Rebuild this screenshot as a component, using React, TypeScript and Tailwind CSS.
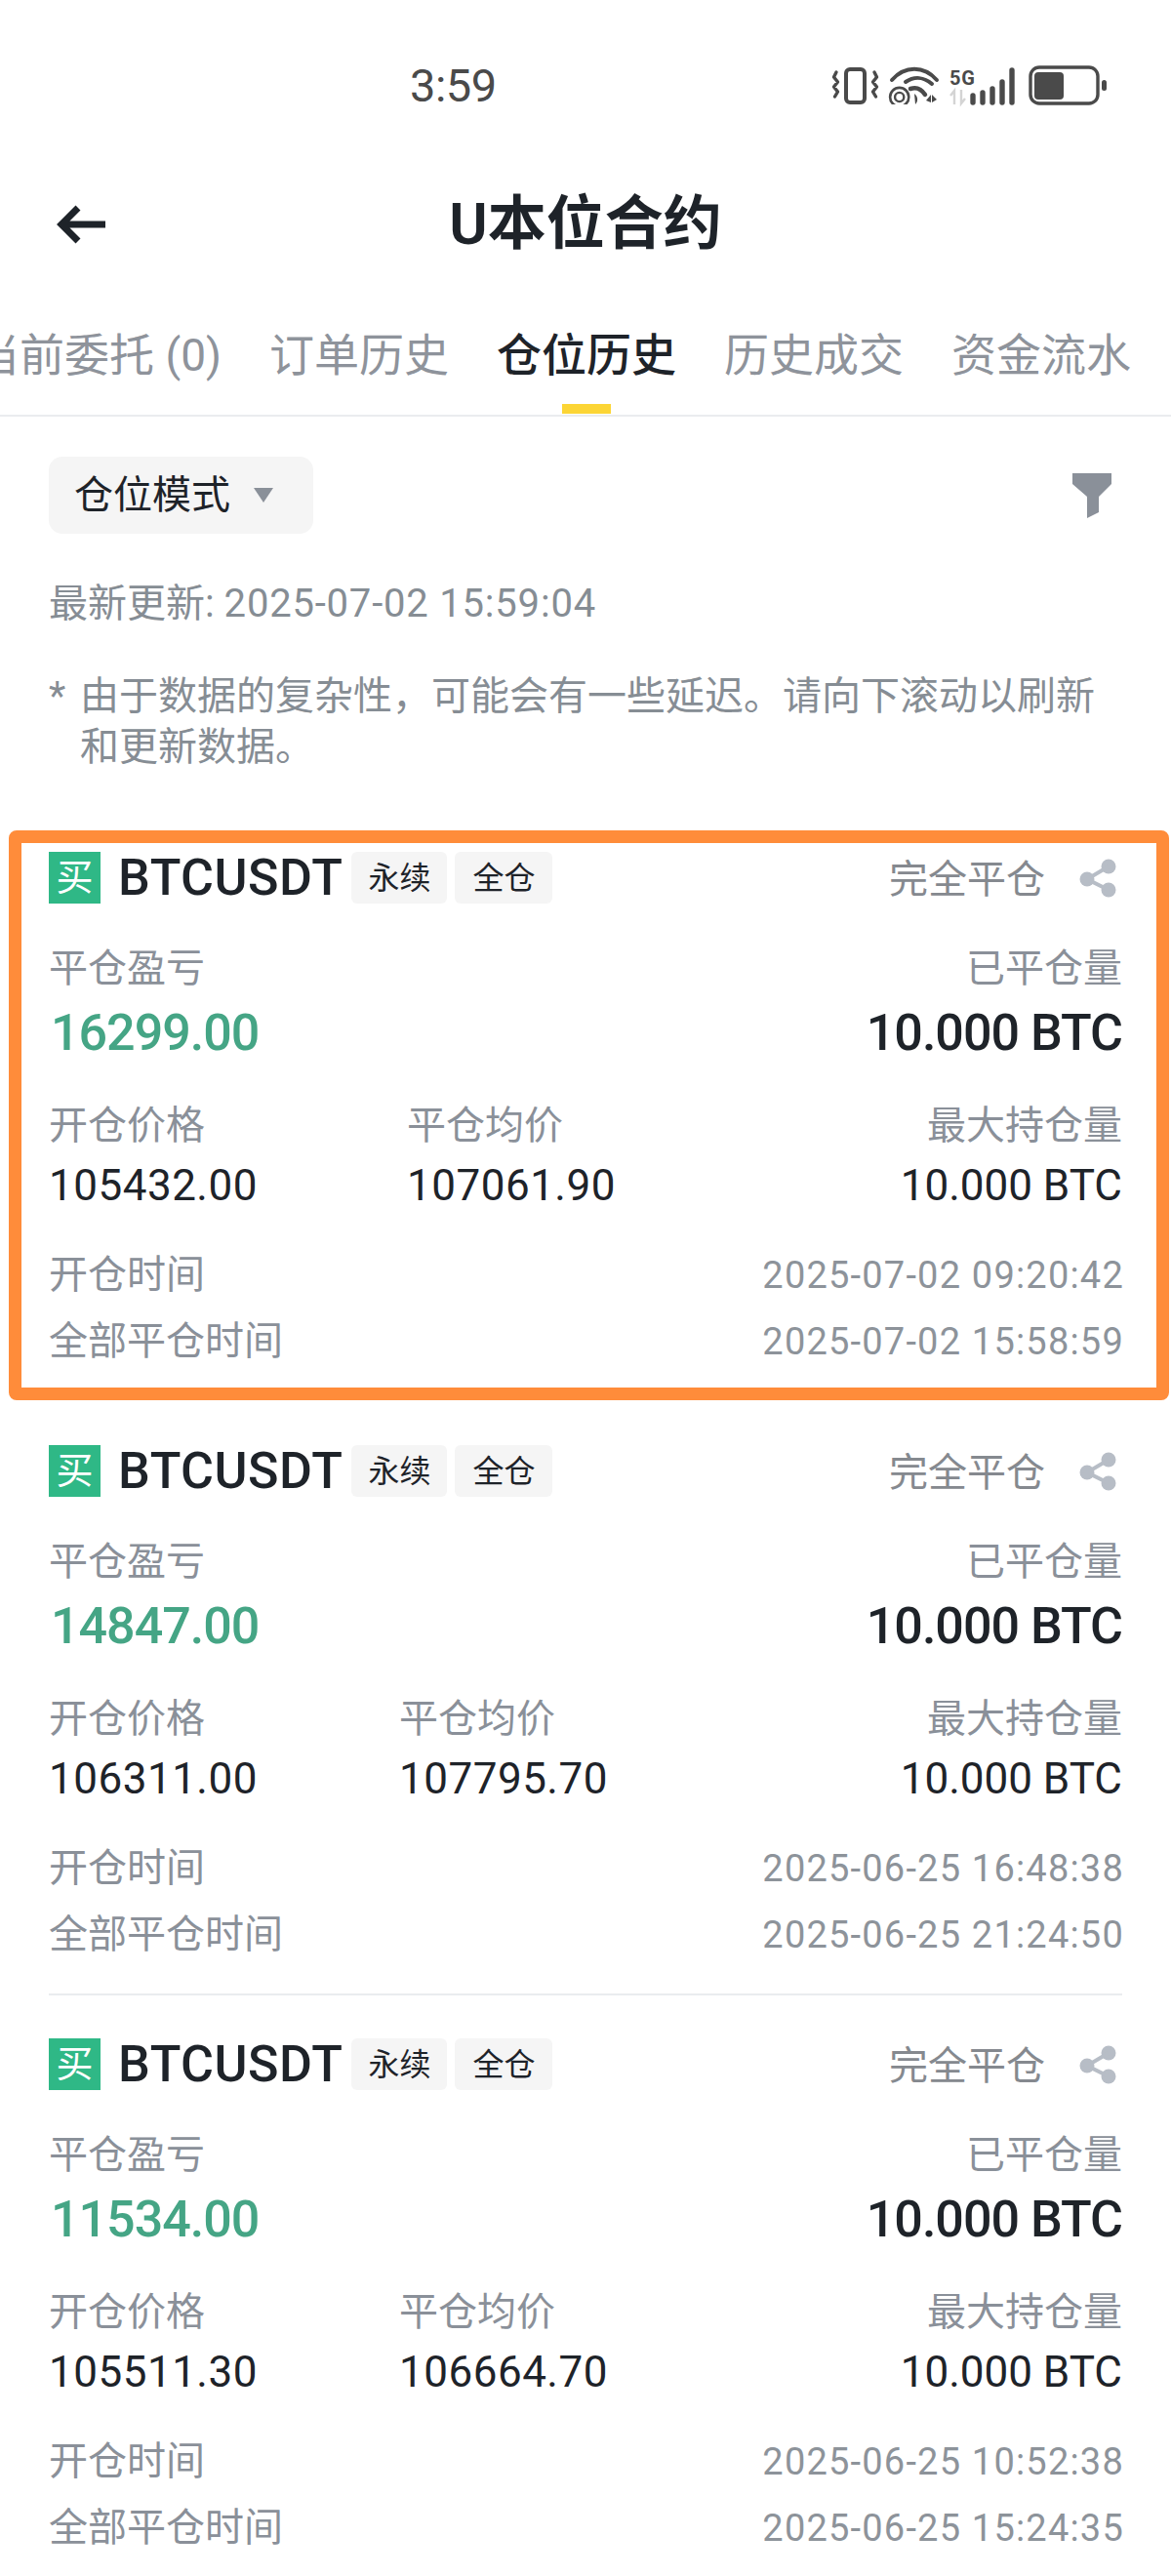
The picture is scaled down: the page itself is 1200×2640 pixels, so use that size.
const sans = `font-['Roboto','Noto_Sans_CJK_SC',sans-serif]`

type Trade = {
  pnl: string
  open: string
  close: string
  openTime: string
  closeTime: string
  midCol: string
}

const trades: Trade[] = [
  { pnl: '16299.00', open: '105432.00', close: '107061.90', openTime: '2025-07-02 09:20:42', closeTime: '2025-07-02 15:58:59', midCol: 'w-[367px]' },
  { pnl: '14847.00', open: '106311.00', close: '107795.70', openTime: '2025-06-25 16:48:38', closeTime: '2025-06-25 21:24:50', midCol: 'w-[359px]' },
  { pnl: '11534.00', open: '105511.30', close: '106664.70', openTime: '2025-06-25 10:52:38', closeTime: '2025-06-25 15:24:35', midCol: 'w-[359px]' },
]

function StatusIcons() {
  return (
    <svg width="290" height="48" viewBox="850 64 290 48" fill="none">
      <defs>
        <clipPath id="wifi-clip"><rect x="905" y="64" width="65" height="43" /></clipPath>
      </defs>
      {/* vibrate */}
      <rect x="867" y="71" width="19" height="34" rx="4" stroke="#4a4a4a" strokeWidth="4" />
      <path d="M857 74l-2.5 5 4 5-4 5 4 5-3 5M896 74l2.5 5-4 5 4 5-4 5 3 5" stroke="#4a4a4a" strokeWidth="3.4" strokeLinecap="round" strokeLinejoin="round" />
      {/* wifi */}
      <g clipPath="url(#wifi-clip)" stroke="#4a4a4a">
        <path d="M914 82c13-15 33-15 46 0" strokeWidth="4" strokeLinecap="round" />
        <path d="M928 84c9-6 19-5 27 2" strokeWidth="4" strokeLinecap="round" />
        <path d="M933 91c6-2 11 0 15 6" strokeWidth="4.5" strokeLinecap="round" />
        <circle cx="921.7" cy="99.5" r="9.6" strokeWidth="2.6" />
        <circle cx="921.7" cy="99.5" r="4.6" strokeWidth="2.4" />
      </g>
      <path d="M937 96c4 3 4 8 1 11zM954 97l-5 6 5 2zM955 97l5 5-5 3z" fill="#4a4a4a" />
      {/* 5G + signal */}
      <text x="973" y="87" fontSize="20" fontWeight="700" fill="#4a4a4a" fontFamily="Roboto, sans-serif" textLength="26">5G</text>
      <path d="M978 107V93l-4 5M985 92v14l4-5" stroke="#d4d4d4" strokeWidth="2.4" />
      <g stroke="#4a4a4a" strokeWidth="5.4" strokeLinecap="round">
        <path d="M997 98v7M1007 95v10M1017 91v14M1027 84v21M1037 72v33" />
      </g>
      {/* battery */}
      <rect x="1056" y="69" width="69" height="37" rx="9" stroke="#4a4a4a" strokeWidth="3.4" />
      <rect x="1060" y="74" width="30" height="28" rx="4" fill="#4a4a4a" />
      <rect x="1129" y="82" width="5" height="11" rx="2.5" fill="#4a4a4a" />
    </svg>
  )
}

function ShareIcon() {
  return (
    <svg width="38" height="40" viewBox="0 0 38 40" fill="#b7bdc6">
      <circle cx="30" cy="8" r="7.5" />
      <circle cx="8" cy="21" r="7.5" />
      <circle cx="30" cy="32" r="7.5" />
      <path d="M30 8L8 21l22 11" fill="none" stroke="#b7bdc6" strokeWidth="4" />
    </svg>
  )
}

function TradeCard({ trade }: { trade: Trade }) {
  return (
    <div>
      {/* Header row */}
      <div className="flex items-center h-[53px]">
        <div className="w-[53px] h-[53px] bg-[#2fb886] text-white text-[38px] flex items-center justify-center">买</div>
        <span className="ml-[18px] text-[52px] font-medium text-[#1e2329] tracking-[0.5px]">BTCUSDT</span>
        <span className="ml-[9px] w-[98px] h-[53px] rounded-md bg-[#f5f5f5] text-[32px] text-[#1e2329] flex items-center justify-center">永续</span>
        <span className="ml-[8px] w-[100px] h-[53px] rounded-md bg-[#f5f5f5] text-[32px] text-[#1e2329] flex items-center justify-center">全仓</span>
        <span className="ml-auto pt-[5px] text-[40px] text-[#85898f]">完全平仓</span>
        <span className="ml-[35px] mr-[6px]"><ShareIcon /></span>
      </div>

      {/* PnL row */}
      <div className="mt-[41px] flex justify-between text-[40px] leading-[52px] text-[#8a9099]">
        <span>平仓盈亏</span>
        <span>已平仓量</span>
      </div>
      <div className="mt-[10px] flex justify-between items-center text-[52px] leading-[60px] font-medium tracking-[-1px]">
        <span className="text-[#45a585] pl-[2px]">{trade.pnl}</span>
        <span className="text-[#1e2329]">10.000 BTC</span>
      </div>

      {/* Price row */}
      <div className="mt-[39px] flex text-[40px] leading-[52px] text-[#8a9099]">
        <span className={trade.midCol}>开仓价格</span>
        <span>平仓均价</span>
        <span className="ml-auto">最大持仓量</span>
      </div>
      <div className="mt-[9px] flex text-[44px] leading-[52px] text-[#1e2329] tracking-[0.5px]">
        <span className={trade.midCol}>{trade.open}</span>
        <span>{trade.close}</span>
        <span className="ml-auto tracking-normal">10.000 BTC</span>
      </div>

      {/* Times */}
      <div className="mt-[40px] flex justify-between text-[40px] leading-[52px] text-[#8a9099]">
        <span>开仓时间</span>
        <span className="mr-[-2px] text-[38px] text-[#8d939a] tracking-[1.2px]">{trade.openTime}</span>
      </div>
      <div className="mt-[16px] flex justify-between text-[40px] leading-[52px] text-[#8a9099]">
        <span>全部平仓时间</span>
        <span className="mr-[-2px] text-[38px] text-[#8d939a] tracking-[1.2px]">{trade.closeTime}</span>
      </div>
    </div>
  )
}

export default function App() {
  return (
    <div className={`w-[1200px] h-[2640px] overflow-hidden bg-white ${sans}`}>
      {/* Status bar */}
      <div className="h-[176px] flex items-center pl-[420px] pr-[60px]">
        <span className="text-[47px] text-[#4a4a4a] tracking-[-0.5px]">3:59</span>
        <span className="ml-auto"><StatusIcons /></span>
      </div>

      {/* Title bar */}
      <div className="h-[108px] grid grid-cols-[1fr_auto_1fr] items-center">
        <div className="pl-[56px]">
          <svg width="54" height="40" viewBox="0 0 54 40" fill="none" stroke="#1e2329" strokeWidth="7">
            <path d="M52 20H8M24 3L7 20l17 17" />
          </svg>
        </div>
        <span className="text-[60px] font-semibold text-[#1e2329]">U本位合约</span>
      </div>

      {/* Tabs */}
      <div className="pt-[51px] h-[143px] border-b-2 border-[#eaecef] overflow-hidden flex gap-[49px] ml-[-26px] w-[1226px] text-[46px] leading-[58px] text-[#8e939b]">
        <span className="shrink-0">当前委托 (0)</span>
        <span className="shrink-0">订单历史</span>
        <div className="shrink-0 flex flex-col items-center text-[#1e2329] font-medium">
          <span>仓位历史</span>
          <div className="mt-[21px] w-[50px] h-[10px] bg-[#fcd535]" />
        </div>
        <span className="shrink-0">历史成交</span>
        <span className="shrink-0">资金流水</span>
      </div>

      <div className="px-[50px]">
        {/* Filter row */}
        <div className="mt-[41px] flex items-center justify-between pr-[11px]">
          <div className="w-[271px] h-[79px] rounded-[14px] bg-[#f5f5f5] flex items-center pl-[26px] text-[40px] text-[#1e2329]">
            <span>仓位模式</span>
            <svg className="ml-[24px]" width="20" height="15" viewBox="0 0 20 15" fill="#8a9099"><path d="M0 0h20L10 15z" /></svg>
          </div>
          <svg width="40" height="46" viewBox="0 0 40 46" fill="#8a9099"><path d="M0 0h40v11L27 24v16l-12 6V24L0 11z" /></svg>
        </div>

        {/* Update info */}
        <div className="mt-[46px] text-[40px] leading-[52px] text-[#868d94]">
          最新更新: <span className="tracking-[0.8px]">2025-07-02 15:59:04</span>
        </div>
        <div className="mt-[43px] flex text-[40px] leading-[52px] text-[#868d94]">
          <span className="w-[32px] shrink-0">*</span>
          <p>由于数据的复杂性，可能会有一些延迟。请向下滚动以刷新和更新数据。</p>
        </div>

        {/* Trades */}
        <div className="mt-[81px] relative">
          <div className="absolute left-[-41px] top-[-22px] w-[1189px] h-[584px] border-[13px] border-[#ff8c3a] rounded-lg pointer-events-none" />
          <TradeCard trade={trades[0]} />
          <div className="mt-[80px]"><TradeCard trade={trades[1]} /></div>
          <div className="mt-[34px] h-[2px] bg-[#eaecef]" />
          <div className="mt-[44px]"><TradeCard trade={trades[2]} /></div>
        </div>
      </div>
    </div>
  )
}
